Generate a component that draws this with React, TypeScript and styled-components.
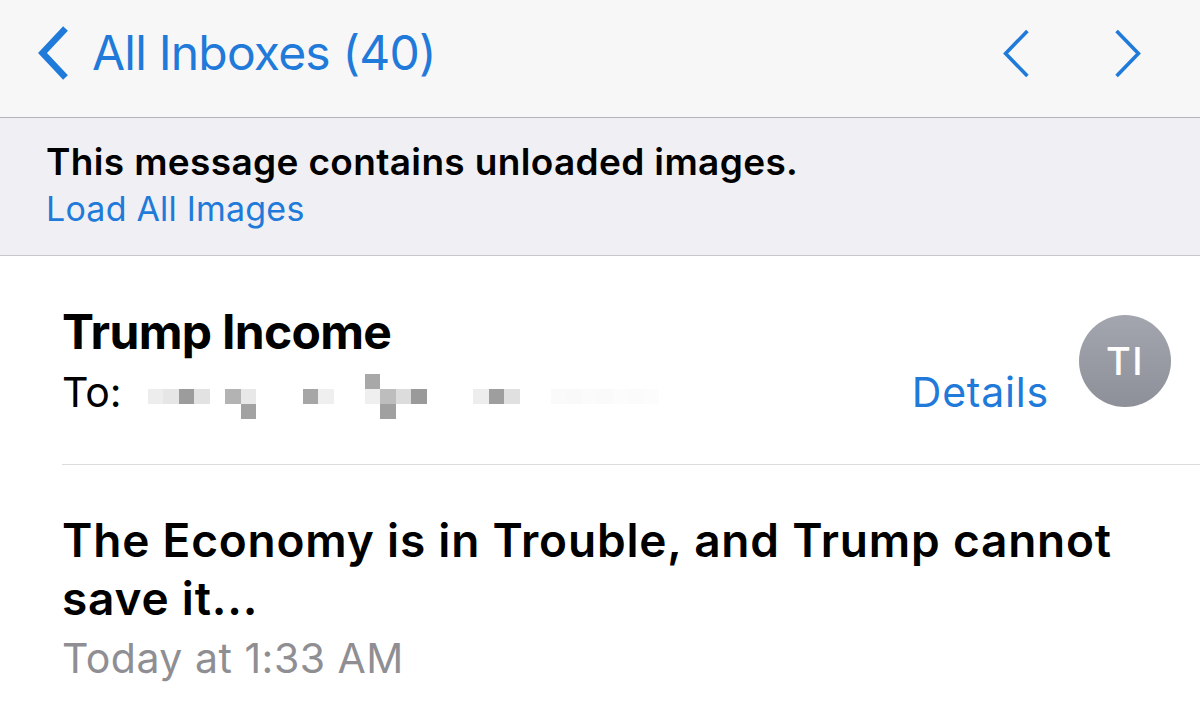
import React from "react";
import styled, { createGlobalStyle } from "styled-components";

const BLUE = "#1f7ad9";

const GlobalStyle = createGlobalStyle`
  html, body { margin: 0; padding: 0; background: #fff; }
  body { font-family: Inter, "Noto Sans", sans-serif; -webkit-font-smoothing: antialiased; }
  * { box-sizing: border-box; }
`;

const Page = styled.div`
  width: 1200px;
  height: 723px;
  overflow: hidden;
  background: #fff;
  display: flex;
  flex-direction: column;
`;

const NavBar = styled.header`
  height: 118px;
  flex-shrink: 0;
  background: #f7f7f8;
  border-bottom: 1px solid #b4b4b8;
  display: flex;
  align-items: center;
  justify-content: space-between;
  padding: 0 58px 11px 36px;
`;

const BackButton = styled.div`
  display: flex;
  align-items: center;
  gap: 20px;
  color: ${BLUE};
`;

const NavTitle = styled.span`
  font-size: 48px;
  line-height: 56px;
  letter-spacing: -0.8px;
  font-weight: 400;
`;

const ArrowGroup = styled.div`
  display: flex;
  align-items: center;
  gap: 82px;
  color: ${BLUE};
`;

const Banner = styled.section`
  height: 138px;
  flex-shrink: 0;
  background: #efeff4;
  border-bottom: 1px solid #c8c8cc;
  padding: 22px 0 0 46px;
  display: flex;
  flex-direction: column;
`;

const BannerTitle = styled.div`
  font-size: 37px;
  line-height: 44px;
  font-weight: 600;
  color: #000;
  letter-spacing: 0.35px;
`;

const BannerLink = styled.div`
  margin-top: 5px;
  font-size: 34px;
  line-height: 40px;
  letter-spacing: 0.2px;
  color: ${BLUE};
`;

const HeaderOuter = styled.section`
  padding-left: 62px;
`;

const HeaderInner = styled.div`
  display: flex;
  align-items: flex-start;
  padding: 48px 29px 48px 0;
  border-bottom: 1px solid #dcdcdf;
`;

const HeaderMain = styled.div`
  flex: 1;
  display: flex;
  flex-direction: column;
`;

const SenderName = styled.div`
  font-size: 48px;
  line-height: 56px;
  font-weight: 700;
  color: #000;
  letter-spacing: -0.7px;
`;

const ToRow = styled.div`
  margin-top: 8px;
  display: flex;
  align-items: center;
  font-size: 41px;
  line-height: 48px;
  letter-spacing: 0.5px;
`;

const ToLabel = styled.span`
  color: #000;
  letter-spacing: 0;
`;

const Mosaic = styled.div`
  align-self: flex-start;
  margin: 6px 0 -3px 26px;
  display: grid;
  grid-template-columns: repeat(33, 15.5px);
  grid-template-rows: repeat(3, 15px);
`;

const Cell = styled.div<{ $c: string }>`
  background: ${(p) => p.$c};
`;

const DetailsLink = styled.span`
  margin-left: auto;
  color: ${BLUE};
  letter-spacing: 0.8px;
`;

const Avatar = styled.div`
  margin: 11px 0 0 30px;
  width: 92px;
  height: 92px;
  border-radius: 50%;
  background: linear-gradient(180deg, #a3a6ae 0%, #8d9099 100%);
  color: #fff;
  display: flex;
  align-items: center;
  justify-content: center;
  font-size: 38px;
  font-weight: 500;
  letter-spacing: 1.5px;
  flex-shrink: 0;
`;

const Body = styled.section`
  padding: 46px 40px 0 62px;
`;

const Subject = styled.div`
  font-size: 46px;
  line-height: 58px;
  font-weight: 600;
  color: #000;
  letter-spacing: 0.8px;
`;

const DateLine = styled.div`
  margin-top: 7px;
  font-size: 41px;
  line-height: 48px;
  letter-spacing: 0.5px;
  color: #8e8e93;
`;

const Chevron = ({ w, h, sw, dir }: { w: number; h: number; sw: number; dir: "l" | "r" }) => {
  const pad = sw;
  const pts =
    dir === "l"
      ? `${w - pad},${pad / 1.2} ${pad},${h / 2} ${w - pad},${h - pad / 1.2}`
      : `${pad},${pad / 1.2} ${w - pad},${h / 2} ${pad},${h - pad / 1.2}`;
  return (
    <svg width={w} height={h} viewBox={`0 0 ${w} ${h}`} fill="none">
      <polyline points={pts} stroke="currentColor" strokeWidth={sw} strokeLinecap="butt" strokeLinejoin="miter" />
    </svg>
  );
};

// pixelated (redacted) recipient list: "row-col" -> colour
const cells: Record<string, string> = {
  "1-0": "#ededed", "1-1": "#e6e6e6", "1-2": "#9c9c9c", "1-3": "#e2e2e2",
  "1-5": "#b3b3b3", "1-6": "#e8e8e8", "2-6": "#a2a2a2",
  "1-10": "#a6a6a6", "1-11": "#efefef",
  "0-14": "#a8a8a8", "1-14": "#efefef", "1-15": "#bdbdbd", "2-15": "#a0a0a0",
  "1-16": "#dcdcdc", "1-17": "#9a9a9a",
  "1-21": "#ededed", "1-22": "#9e9e9e", "1-23": "#e0e0e0",
  "1-26": "#fafafa", "1-27": "#f9f9f9", "1-28": "#fbfbfb", "1-29": "#fafafa",
  "1-30": "#fcfcfc", "1-31": "#fbfbfb", "1-32": "#fcfcfc",
};

export default function App() {
  const grid: React.ReactNode[] = [];
  for (let r = 0; r < 3; r++) {
    for (let c = 0; c < 33; c++) {
      const col = cells[`${r}-${c}`] ?? "transparent";
      grid.push(<Cell key={`${r}-${c}`} $c={col} />);
    }
  }
  return (
    <Page>
      <GlobalStyle />
      <NavBar>
        <BackButton>
          <Chevron w={36} h={60} sw={6.5} dir="l" />
          <NavTitle>All Inboxes (40)</NavTitle>
        </BackButton>
        <ArrowGroup>
          <Chevron w={29} h={51} sw={3.6} dir="l" />
          <Chevron w={29} h={51} sw={3.6} dir="r" />
        </ArrowGroup>
      </NavBar>
      <Banner>
        <BannerTitle>This message contains unloaded images.</BannerTitle>
        <BannerLink>Load All Images</BannerLink>
      </Banner>
      <HeaderOuter>
        <HeaderInner>
          <HeaderMain>
            <SenderName>Trump Income</SenderName>
            <ToRow>
              <ToLabel>To:</ToLabel>
              <Mosaic>{grid}</Mosaic>
              <DetailsLink>Details</DetailsLink>
            </ToRow>
          </HeaderMain>
          <Avatar>TI</Avatar>
        </HeaderInner>
      </HeaderOuter>
      <Body>
        <Subject>The Economy is in Trouble, and Trump cannot save it...</Subject>
        <DateLine>Today at 1:33 AM</DateLine>
      </Body>
    </Page>
  );
}
